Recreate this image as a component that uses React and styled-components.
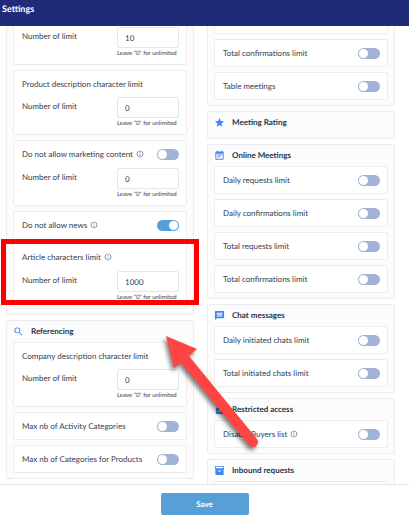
import { useState } from "react";
import styled, { createGlobalStyle } from "styled-components";
import {
  MdSearch,
  MdStar,
  MdEventNote,
  MdMessage,
  MdLock,
  MdInventory2,
  MdOutlineInfo,
} from "react-icons/md";

const GlobalStyle = createGlobalStyle`
  * {
    box-sizing: border-box;
  }
  body {
    margin: 0;
    background-color: white;
    color: #323e50;
    font-family: Lato, "Open Sans", sans-serif;
    font-size: 8px;
    line-height: 12px;
    text-rendering: geometricPrecision;
  }
`;

const Page = styled.div`
  display: flex;
  flex-direction: column;
  height: 100vh;
  overflow: hidden;
`;

const Header = styled.header`
  height: 26px;
  flex: none;
  padding: 3px 2px;
  background-color: #1f2a78;
  color: white;
`;

const Title = styled.h1`
  margin: 0;
  font-size: 9px;
  line-height: 12px;
  font-weight: 700;
`;

const Content = styled.main`
  position: relative;
  flex: 1;
  min-height: 0;
  overflow: hidden;
  display: grid;
  grid-template-columns: minmax(0, 1fr) minmax(0, 1fr);
  align-items: start;
  gap: 13px;
  padding: 0 14px 0 6px;
`;

const Column = styled.div`
  display: flex;
  flex-direction: column;
  gap: 5px;
`;

const Section = styled.section`
  display: flex;
  flex-direction: column;
  gap: 5px;
  min-height: 28px;
  padding: ${(props) => (props.$open ? "0 6px 5px" : "4px 6px 5px")};
  border: 1px solid #ececee;
  border-top-width: ${(props) => (props.$open ? "0" : "1px")};
  border-radius: ${(props) => (props.$open ? "0 0 2px 2px" : "2px")};
  background-color: #fcfcfc;
`;

const Heading = styled.h2`
  display: flex;
  align-items: center;
  gap: 7px;
  height: 12px;
  margin: 0;
  color: #27334a;
  font-size: 8px;
  line-height: 12px;
  font-weight: 700;

  svg {
    flex: none;
    width: 11px;
    height: 11px;
    color: #4285f4;
  }
`;

const Card = styled.div`
  padding: ${(props) => (props.$open ? "1px 7px 4px 8px" : "7px 7px 4px 8px")};
  border: 1px solid #ececee;
  border-top-width: ${(props) => (props.$open ? "0" : "1px")};
  border-radius: ${(props) => (props.$open ? "0 0 2px 2px" : "2px")};
  background-color: white;
`;

const CardEnd = styled(Card)`
  height: 8px;
  padding: 0;
`;

const Row = styled.div`
  display: flex;
  align-items: center;
  justify-content: space-between;
  height: 12px;
  margin-bottom: ${(props) => (props.$gap ? props.$gap : "3px")};
  white-space: nowrap;
`;

const Label = styled.label`
  display: flex;
  align-items: center;
  gap: 3px;

  svg {
    width: 8px;
    height: 8px;
    color: #56637a;
  }
`;

const Switch = styled.input`
  appearance: none;
  display: flex;
  align-items: center;
  flex: none;
  width: 22px;
  height: 11px;
  margin: 0;
  padding: 1px;
  border-radius: 6px;
  background-color: #a0b3d6;

  &::before {
    content: "";
    width: 9px;
    height: 9px;
    border-radius: 50%;
    background-color: white;
  }

  &:checked {
    justify-content: flex-end;
    background-color: #559fd8;
  }
`;

const LimitRow = styled.div`
  display: flex;
  justify-content: space-between;
  white-space: nowrap;

  > label {
    padding-top: 3px;
  }
`;

const LimitField = styled.div`
  width: 62px;
`;

const LimitInput = styled.input`
  display: block;
  width: 100%;
  height: 21px;
  padding: 0 7px;
  border: 1px solid #e6e6ea;
  border-radius: 2px;
  background-color: white;
  color: #323e50;
  font-family: inherit;
  font-size: 8px;
  text-rendering: inherit;
`;

const Hint = styled.small`
  display: block;
  font-size: 6px;
  line-height: 12px;
`;

const Footer = styled.footer`
  display: flex;
  flex: none;
  justify-content: center;
  padding-top: 8px;
  border-top: 1px solid #e6e6e8;
  background-color: white;
`;

const SaveButton = styled.button`
  width: 88px;
  height: 22px;
  padding: 0;
  border: 0;
  border-radius: 2px;
  background-color: #569fd7;
  color: white;
  font-family: inherit;
  font-size: 8px;
  font-weight: 700;
  text-rendering: inherit;
`;

const Highlight = styled.div`
  position: absolute;
  top: 213px;
  left: 1px;
  width: 198px;
  height: 66px;
  border: 5px solid #ff0000;
  pointer-events: none;
`;

const Arrow = styled.svg`
  position: absolute;
  top: 304px;
  left: 156px;
  width: 110px;
  height: 126px;
  pointer-events: none;
  filter: drop-shadow(-2px 3px 2px rgba(0, 0, 0, 0.5));
`;

function SwitchRow({ id, label, info, on, gap }) {
  const [checked, setChecked] = useState(Boolean(on));
  return (
    <Row $gap={gap}>
      <Label htmlFor={id}>
        {label}
        {info && <MdOutlineInfo />}
      </Label>
      <Switch
        id={id}
        type="checkbox"
        checked={checked}
        onChange={(e) => setChecked(e.target.checked)}
      />
    </Row>
  );
}

function SwitchCard(props) {
  return (
    <Card>
      <SwitchRow {...props} />
    </Card>
  );
}

function Limit({ id, value }) {
  return (
    <LimitRow>
      <label htmlFor={id}>Number of limit</label>
      <LimitField>
        <LimitInput id={id} type="text" defaultValue={value} />
        <Hint>Leave "0" for unlimited</Hint>
      </LimitField>
    </LimitRow>
  );
}

function App() {
  return (
    <Page>
      <GlobalStyle />
      <Header>
        <Title>Settings</Title>
      </Header>
      <Content>
        <Column>
          <Section $open>
            <Card $open>
              <Limit id="marketing-limit" value="10" />
            </Card>
            <Card>
              <Row $gap="7px">Product description character limit</Row>
              <Limit id="product-limit" value="0" />
            </Card>
            <Card>
              <SwitchRow
                id="no-marketing"
                label="Do not allow marketing content"
                info
                gap="8px"
              />
              <Limit id="content-limit" value="0" />
            </Card>
            <Card>
              <SwitchRow
                id="no-news"
                label="Do not allow news"
                info
                on
                gap="20px"
              />
              <Row $gap="8px">
                <Label as="span">
                  Article characters limit
                  <MdOutlineInfo />
                </Label>
              </Row>
              <Limit id="article-limit" value="1000" />
            </Card>
          </Section>
          <Section>
            <Heading>
              <MdSearch />
              Referencing
            </Heading>
            <Card>
              <Row $gap="7px">Company description character limit</Row>
              <Limit id="company-limit" value="0" />
            </Card>
            <SwitchCard id="activity" label="Max nb of Activity Categories" />
            <SwitchCard
              id="product-categories"
              label="Max nb of Categories for Products"
            />
          </Section>
        </Column>
        <Column>
          <Section $open>
            <CardEnd $open />
            <SwitchCard id="confirmations" label="Total confirmations limit" />
            <SwitchCard id="table" label="Table meetings" />
          </Section>
          <Section>
            <Heading>
              <MdStar />
              Meeting Rating
            </Heading>
          </Section>
          <Section>
            <Heading>
              <MdEventNote />
              Online Meetings
            </Heading>
            <SwitchCard id="daily-requests" label="Daily requests limit" />
            <SwitchCard
              id="daily-confirmations"
              label="Daily confirmations limit"
            />
            <SwitchCard id="total-requests" label="Total requests limit" />
            <SwitchCard
              id="total-confirmations"
              label="Total confirmations limit"
            />
          </Section>
          <Section>
            <Heading>
              <MdMessage />
              Chat messages
            </Heading>
            <SwitchCard id="daily-chats" label="Daily initiated chats limit" />
            <SwitchCard id="total-chats" label="Total initiated chats limit" />
          </Section>
          <Section>
            <Heading>
              <MdLock />
              Restricted access
            </Heading>
            <SwitchCard id="buyers" label="Disable Buyers list" info />
          </Section>
          <Section>
            <Heading>
              <MdInventory2 />
              Inbound requests
            </Heading>
            <CardEnd />
          </Section>
        </Column>
        <Highlight />
        <Arrow viewBox="0 0 110 126" aria-hidden="true">
          <path
            d="M10 6L41 19L33 26L101 109A5 5 0 0 1 93 115L25 33L18 38Z"
            fill="#ff4444"
          />
        </Arrow>
      </Content>
      <Footer>
        <SaveButton type="button">Save</SaveButton>
      </Footer>
    </Page>
  );
}

export default App;
